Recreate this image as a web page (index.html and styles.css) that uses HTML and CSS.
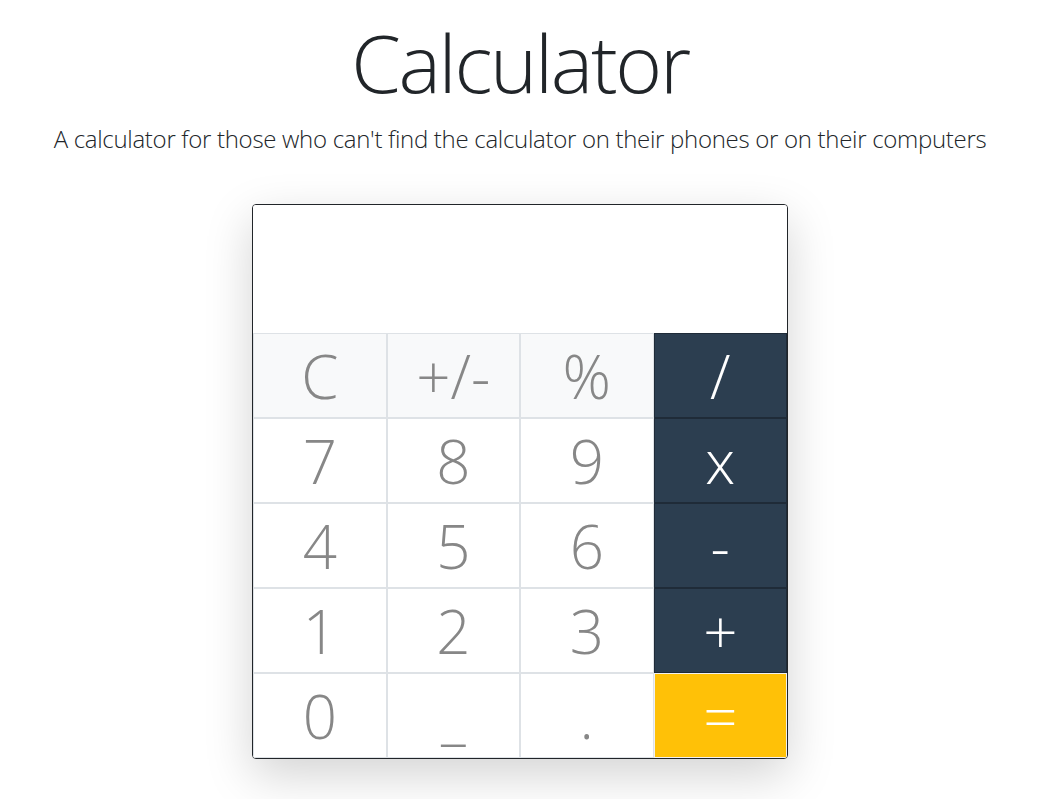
FILE: index.html
```html
<!DOCTYPE html>
<html lang="en">
<head>
<meta charset="utf-8">
<title>Calculator</title>
<link rel="stylesheet" href="styles.css">
</head>
<body>
<header class="hero">
  <h1 class="title">Calculator</h1>
  <p class="lead">A calculator for those who can't find the calculator on their phones or on their computers</p>
</header>
<main class="calc">
  <div class="screen"></div>
  <div class="keys">
    <button class="key fn">C</button>
    <button class="key fn">+/-</button>
    <button class="key fn">%</button>
    <button class="key op">/</button>
    <button class="key">7</button>
    <button class="key">8</button>
    <button class="key">9</button>
    <button class="key op">x</button>
    <button class="key">4</button>
    <button class="key">5</button>
    <button class="key">6</button>
    <button class="key op">-</button>
    <button class="key">1</button>
    <button class="key">2</button>
    <button class="key">3</button>
    <button class="key op">+</button>
    <button class="key">0</button>
    <button class="key">_</button>
    <button class="key">.</button>
    <button class="key eq">=</button>
  </div>
</main>
</body>
</html>
```
FILE: styles.css
```css
* { box-sizing: border-box; }
html, body { margin: 0; padding: 0; background: #fff; }
body {
  font-family: "Open Sans", "Noto Sans", sans-serif;
  font-weight: 300;
  color: #212529;
  min-height: 100vh;
  padding-bottom: 60px;
}
.hero {
  text-align: center;
  padding-top: 14px;
}
.title {
  margin: 0;
  font-size: 80px;
  font-weight: 300;
  line-height: 96px;
  letter-spacing: -2.3px;
}
.lead {
  margin: 14px 0 0;
  font-size: 24px;
  font-weight: 300;
  line-height: 30px;
  letter-spacing: -0.3px;
}
.calc {
  width: 536px;
  margin: 50px auto 0;
  border: 1px solid #212529;
  border-radius: 4px;
  overflow: hidden;
  box-shadow: 0 16px 48px rgba(0,0,0,.175);
  background: #fff;
}
.screen {
  height: 128px;
  background: #fff;
}
.keys {
  display: grid;
  grid-template-columns: repeat(4, 1fr);
  grid-auto-rows: 85px;
}
.key {
  margin: 0;
  padding: 0;
  border: 1px solid #dee2e6;
  background: #fff;
  color: #878787;
  font-family: "Open Sans", "Noto Sans", sans-serif;
  font-weight: 300;
  font-size: 60px;
  line-height: 1;
  display: flex;
  align-items: center;
  justify-content: center;
}
.key.fn { background: #f8f9fa; }
.key.op {
  background: #2c3e50;
  border-color: #1f2b38;
  color: #fff;
}
.key.eq {
  background: #ffc107;
  border-color: #f1f1f1;
  color: #fff;
}
```
